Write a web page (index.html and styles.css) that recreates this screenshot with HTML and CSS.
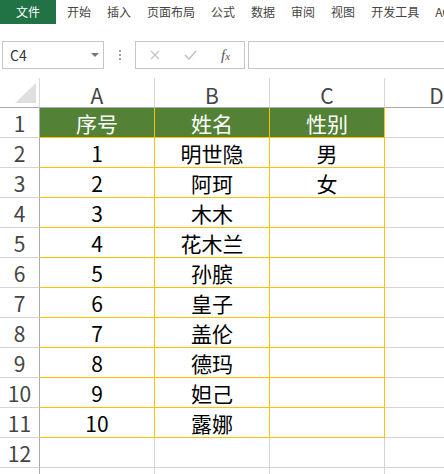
FILE: index.html
```html
<!DOCTYPE html>
<html lang="zh-CN">
<head>
    <meta charset="UTF-8">
    <title>Excel</title>
    <link rel="stylesheet" href="styles.css">
</head>
<body>
    <div class="tabs">
        <span class="tab tab-file">文件</span>
        <span class="tab">开始</span>
        <span class="tab">插入</span>
        <span class="tab">页面布局</span>
        <span class="tab">公式</span>
        <span class="tab">数据</span>
        <span class="tab">审阅</span>
        <span class="tab">视图</span>
        <span class="tab">开发工具</span>
        <span class="tab">AC</span>
    </div>

    <div class="formula-bar">
        <div class="name-box">
            <span>C4</span>
            <svg class="caret" width="8" height="4" viewBox="0 0 8 4"><path d="M0 0h8L4 4z" fill="#777"/></svg>
        </div>
        <div class="grip"><i></i><i></i><i></i></div>
        <div class="fx-buttons">
            <svg width="10" height="10" viewBox="0 0 10 10"><path d="M1 1l8 8M9 1l-8 8" stroke="#c3c3c3" stroke-width="1.3"/></svg>
            <svg width="13" height="10" viewBox="0 0 13 10"><path d="M1 5l4 4 7-8" stroke="#c3c3c3" stroke-width="1.6" fill="none"/></svg>
            <span class="fx">f<small>x</small></span>
        </div>
        <div class="formula-input"></div>
    </div>

    <div class="sheet">
        <div class="corner"><span class="tri"></span></div>
        <div class="col-head">A</div>
        <div class="col-head">B</div>
        <div class="col-head">C</div>
        <div class="col-head">D</div>

        <div class="row-head">1</div>
        <div class="cell title">序号</div>
        <div class="cell title">姓名</div>
        <div class="cell title">性别</div>
        <div class="cell blank"></div>

        <div class="row-head">2</div>
        <div class="cell">1</div>
        <div class="cell">明世隐</div>
        <div class="cell">男</div>
        <div class="cell blank"></div>

        <div class="row-head">3</div>
        <div class="cell">2</div>
        <div class="cell">阿珂</div>
        <div class="cell">女</div>
        <div class="cell blank"></div>

        <div class="row-head">4</div>
        <div class="cell">3</div>
        <div class="cell">木木</div>
        <div class="cell"></div>
        <div class="cell blank"></div>

        <div class="row-head">5</div>
        <div class="cell">4</div>
        <div class="cell">花木兰</div>
        <div class="cell"></div>
        <div class="cell blank"></div>

        <div class="row-head">6</div>
        <div class="cell">5</div>
        <div class="cell">孙膑</div>
        <div class="cell"></div>
        <div class="cell blank"></div>

        <div class="row-head">7</div>
        <div class="cell">6</div>
        <div class="cell">皇子</div>
        <div class="cell"></div>
        <div class="cell blank"></div>

        <div class="row-head">8</div>
        <div class="cell">7</div>
        <div class="cell">盖伦</div>
        <div class="cell"></div>
        <div class="cell blank"></div>

        <div class="row-head">9</div>
        <div class="cell">8</div>
        <div class="cell">德玛</div>
        <div class="cell"></div>
        <div class="cell blank"></div>

        <div class="row-head">10</div>
        <div class="cell">9</div>
        <div class="cell">妲己</div>
        <div class="cell"></div>
        <div class="cell blank"></div>

        <div class="row-head">11</div>
        <div class="cell">10</div>
        <div class="cell">露娜</div>
        <div class="cell"></div>
        <div class="cell blank"></div>

        <div class="row-head">12</div>
        <div class="cell blank"></div>
        <div class="cell blank"></div>
        <div class="cell blank"></div>
        <div class="cell blank"></div>

        <div class="row-head"></div>
        <div class="cell blank"></div>
        <div class="cell blank"></div>
        <div class="cell blank"></div>
        <div class="cell blank"></div>
    </div>
</body>
</html>
```

FILE: styles.css
```css
body {
    margin: 0;
    background: #fff;
    font-family: "Noto Sans CJK SC", "Noto Sans", sans-serif;
    overflow: hidden;
}
.tabs {
    display: flex;
    height: 24px;
    align-items: center;
    gap: 16px;
    font-size: 12px;
    color: #444;
    white-space: nowrap;
}
.tab {
    line-height: 24px;
}
.tab-file {
    background: #217346;
    color: #fff;
    padding: 0 16px;
    margin-right: -5px;
}
.formula-bar {
    display: flex;
    align-items: center;
    margin-top: 17px;
    height: 28px;
    padding-left: 2px;
}
.name-box {
    box-sizing: border-box;
    width: 102px;
    height: 28px;
    border: 1px solid #c6c6c6;
    display: flex;
    align-items: center;
    justify-content: space-between;
    padding: 0 4px 0 7px;
    font-size: 14px;
    color: #333;
}
.grip {
    width: 31px;
    display: flex;
    flex-direction: column;
    align-items: center;
    gap: 2px;
}
.grip i {
    width: 2px;
    height: 2px;
    background: #a0a0a0;
}
.fx-buttons {
    box-sizing: border-box;
    width: 110px;
    height: 28px;
    border: 1px solid #c6c6c6;
    display: flex;
    align-items: center;
    gap: 24px;
    padding-left: 14px;
}
.fx {
    font-family: "Liberation Serif", serif;
    font-style: italic;
    font-size: 15px;
    color: #555;
}
.fx small {
    font-size: 11px;
}
.formula-input {
    flex: 1;
    height: 28px;
    box-sizing: border-box;
    border: 1px solid #c6c6c6;
    border-right: none;
    margin-left: 3px;
}
.sheet {
    display: grid;
    grid-template-columns: 40px 115px 115px 115px 104px;
    grid-auto-rows: 30px;
    margin-top: 9px;
}
.sheet > div {
    box-sizing: border-box;
    display: flex;
    align-items: center;
    justify-content: center;
    overflow: hidden;
    white-space: nowrap;
}
.corner, .col-head {
    border-right: 1px solid #d8d8d8;
    border-bottom: 1px solid #ababab;
    font-size: 21px;
    color: #444;
    padding-top: 4px;
}
.corner {
    position: relative;
}
.tri {
    position: absolute;
    left: 15px;
    top: 5px;
    width: 0;
    height: 0;
    border-left: 21px solid transparent;
    border-bottom: 20px solid #dfdfdf;
}
.row-head {
    border-right: 1px solid #ababab;
    border-bottom: 1px solid #d4d4d4;
    font-size: 21px;
    color: #444;
}
.cell {
    border-right: 1px solid #ffc000;
    border-bottom: 1px solid #ffc000;
    font-size: 21px;
    color: #000;
}
.cell.blank {
    border-right: 1px solid #d4d4d4;
    border-bottom: 1px solid #d4d4d4;
}
.title {
    background: #538135;
    color: #fff;
}
```
